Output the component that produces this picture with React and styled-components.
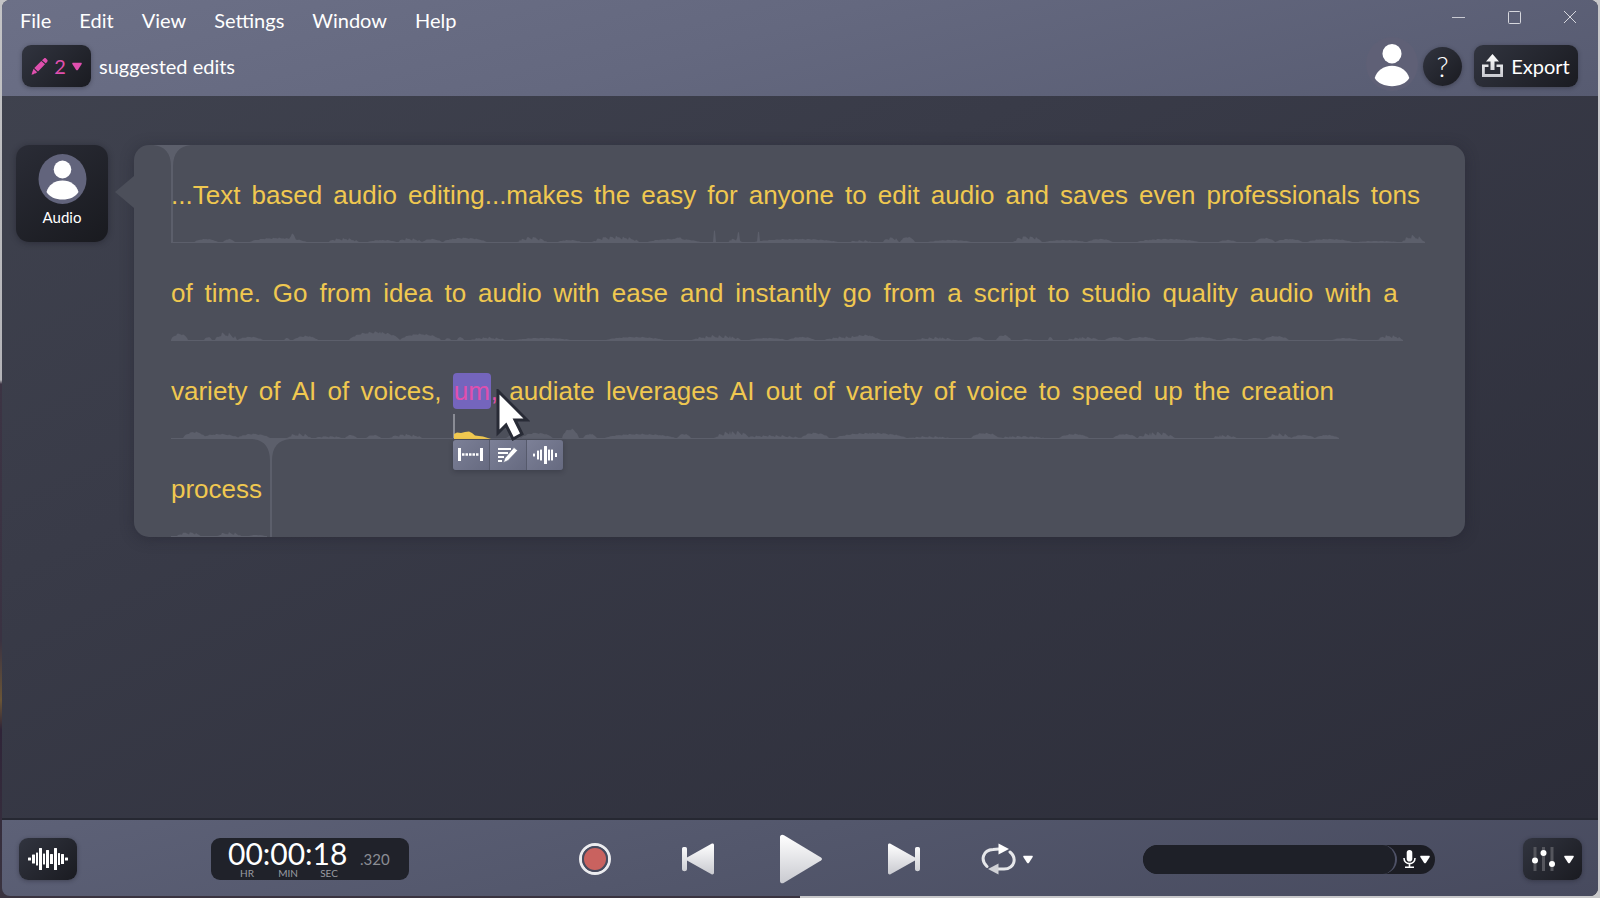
import React from "react";
import styled, { createGlobalStyle } from "styled-components";

const vars = {
	ui: `Lato, "Open Sans", sans-serif`,
	script: `"Liberation Sans", Arial, sans-serif`,
	yellow: "#f0c850",
	pink: "#e04fae",
	wave: "#5c5f6b",
	dark: "linear-gradient(135deg, #31343f 0%, #1a1b21 100%)",
};

const GlobalStyle = createGlobalStyle`
	* {
		box-sizing: border-box;
	}
	body {
		margin: 0;
		background: #d6d6d8;
		font-family: ${vars.ui};
		color: #fff;
	}
	button {
		margin: 0;
		padding: 0;
		border: 0;
		background: none;
		color: inherit;
		font-family: inherit;
		cursor: pointer;
	}
	svg {
		display: block;
		flex: none;
	}
`;

const Desktop = styled.div`
	display: flex;
	min-height: 100vh;
	padding: 0 2px 2px;
	background: linear-gradient(180deg, #c4c4c6 0, #b4b4b8 380px, #3c3444 384px, #3a3242 640px, #6a5536 700px, #2f2438 730px, #3a3440 100%) left / 50% 100% no-repeat, #c8c8ca;
`;

const Window = styled.div`
	flex: 1;
	min-width: 0;
	display: flex;
	flex-direction: column;
	border-radius: 8px;
	overflow: hidden;
	background: linear-gradient(155deg, #40434f 0%, #393b48 35%, #2b2c38 100%);
`;

const Header = styled.header`
	display: flex;
	flex-direction: column;
	gap: 5px;
	padding: 0 20px 9px 18px;
	background: linear-gradient(165deg, #6c7087 0%, #64687f 45%, #575b71 100%);
`;

const TitleRow = styled.div`
	display: flex;
	justify-content: space-between;
	align-items: flex-start;
	height: 40px;
`;

const Menu = styled.nav`
	display: flex;
	gap: 28px;
`;

const MenuItem = styled.button`
	height: 40px;
	font-size: 20px;
`;

const WindowControls = styled.div`
	display: flex;
	gap: 40px;
	height: 33px;
	align-items: center;
`;

const ControlButton = styled.button`
	width: 16px;
	height: 16px;
`;

const ToolRow = styled.div`
	display: flex;
	align-items: center;
	justify-content: space-between;
	padding-left: 2px;
`;

const Group = styled.div`
	display: flex;
	align-items: center;
	gap: ${({ $gap }) => $gap}px;
`;

const DarkButton = styled.button`
	display: flex;
	align-items: center;
	justify-content: center;
	gap: ${({ $gap = 6 }) => $gap}px;
	width: ${({ $width }) => $width}px;
	height: 42px;
	border-radius: 9px;
	background: ${vars.dark};
	box-shadow: 0 1px 4px rgba(20, 20, 30, .35);
	color: ${({ $accent }) => $accent ? vars.pink : "#fff"};
	font-size: 20px;
`;

const HelpButton = styled(DarkButton)`
	border-radius: 50%;
	width: 39px;
	height: 39px;
	font-size: 28px;
	font-weight: 300;
`;

const Account = styled.button`
	display: flex;
	align-items: center;
	width: 52px;
	height: 42px;
	margin-right: -7px;
	padding-bottom: 4px;
`;

const Label = styled.span`
	font-size: 20px;
`;

const Main = styled.main`
	flex: 1;
	display: flex;
	align-items: flex-start;
	gap: 26px;
	padding: 49px 133px 49px 14px;
`;

const Speaker = styled.button`
	flex: none;
	display: flex;
	flex-direction: column;
	align-items: center;
	justify-content: flex-start;
	gap: 4px;
	width: 92px;
	height: 97px;
	padding-top: 9px;
	border-radius: 13px;
	background: linear-gradient(145deg, #2a2c36 0%, #191a1f 100%);
	box-shadow: 0 1px 6px rgba(20, 20, 30, .4);
	font-size: 15px;
	line-height: 18px;
`;

const Bubble = styled.section`
	position: relative;
	flex: 1;
	min-width: 0;
	padding: 0 36px 0 37px;
	border-radius: 15px;
	background: #4c4f5a;
	box-shadow: 0 2px 14px rgba(30, 30, 42, .4);
	&::before {
		content: "";
		position: absolute;
		right: 100%;
		top: 31px;
		border: solid transparent;
		border-width: 16px 19px 16px 0;
		border-right-color: #4c4f5a;
	}
`;

const Line = styled.div`
	position: relative;
	display: flex;
	flex-direction: column;
	width: fit-content;
	height: 98px;
	padding-top: 32px;
	color: ${vars.yellow};
	font-family: ${vars.script};
	font-size: 26px;
	line-height: 36px;
	white-space: nowrap;
`;

/* words spread out over the length of their audio */
const Words = styled.div`
	display: flex;
	justify-content: space-between;
	gap: 8px;
	padding-right: 5px;
`;

const WaveSvg = styled.svg`
	margin-top: auto;
	height: 24px;
	overflow: visible;
	fill: ${vars.wave};
`;

const Marker = styled.svg`
	position: absolute;
	top: 0;
	left: ${({ $end }) => $end ? "calc(100% - 17px)" : "-20px"};
	fill: ${vars.wave};
`;

const Filler = styled.span`
	position: relative;
	color: ${vars.pink};
`;

const Selected = styled.mark`
	display: inline-block;
	padding: 0 1px;
	border-radius: 4px;
	background: #7465bd;
	color: inherit;
`;

const SelectedWave = styled.svg`
	position: absolute;
	left: 0;
	top: 41px;
`;

const EditBar = styled.div`
	position: absolute;
	z-index: 1;
	left: 0;
	top: 67px;
	display: flex;
	gap: 1px;
	border-radius: 3px;
	overflow: hidden;
	background: #565a6c;
	box-shadow: 0 2px 5px rgba(30, 30, 42, .3);
`;

const EditButton = styled.button`
	display: grid;
	place-items: center;
	width: 36px;
	height: 30px;
	background: linear-gradient(135deg, #7c8097, #666a80);
`;

const Pointer = styled.svg`
	position: absolute;
	z-index: 2;
	left: 43px;
	top: 16px;
`;

const Footer = styled.footer`
	display: grid;
	grid-template-columns: 1fr auto 1fr;
	align-items: center;
	height: 78px;
	padding: 2px 16px 0 17px;
	border-top: 2px solid #262832;
	background: linear-gradient(165deg, #5d6177 0%, #53576c 45%, #474a5e 100%);
`;

const Timer = styled.div`
	display: grid;
	grid-template-columns: 120px 1fr;
	grid-template-rows: 29px 13px;
	column-gap: 12px;
	width: 198px;
	height: 42px;
	padding: 0 17px;
	border-radius: 9px;
	background: #20222a;
`;

const Clock = styled.time`
	font-size: 30px;
	line-height: 30px;
`;

const Millis = styled.span`
	grid-row: span 2;
	color: #8b8d94;
	font-size: 15px;
	line-height: 42px;
`;

const Units = styled.div`
	display: grid;
	grid-template-columns: repeat(3, 1fr);
	column-gap: 3px;
	color: #9a9ca2;
	font-size: 10px;
	line-height: 13px;
	text-align: center;
`;

const Transport = styled.div`
	display: grid;
	grid-template-columns: repeat(5, 103px);
	justify-items: center;
	align-items: center;
`;

const PlainButton = styled.button`
	display: flex;
	align-items: center;
	gap: 7px;
`;

const RightGroup = styled(Group)`
	justify-content: flex-end;
`;

const Input = styled.div`
	display: flex;
	width: 292px;
	height: 29px;
	border-radius: 15px;
	overflow: hidden;
	background: #1c1d24;
`;

const Meter = styled.div`
	width: 254px;
	border-right: 2px solid #4f5267;
	border-radius: 15px;
	background: #1e2028;
`;

const MicButton = styled.button`
	display: flex;
	align-items: center;
	gap: 4px;
	padding-left: 6px;
`;

// [start, end, peak height, jagged]
const lines = [
	{
		text: "...Text based audio editing...makes the easy for anyone to edit audio and saves even professionals tons",
		length: 1254,
		humps: [[23, 47, 4], [52, 64, 4], [78, 136, 5], [118, 125, 9], [156, 189, 5, 1], [196, 226, 3], [226, 251, 5, 1], [251, 271, 4], [271, 316, 5], [346, 376, 6, 1], [386, 411, 3], [421, 469, 7, 1], [476, 530, 4], [503, 512, 6], [542, 545, 14], [557, 571, 5, 1], [566, 569, 11], [582, 669, 4], [586, 589, 12], [677, 702, 3, 1], [712, 728, 6, 1], [729, 744, 6], [756, 802, 3], [842, 872, 7, 1], [872, 916, 3], [916, 942, 4], [964, 1029, 4], [1047, 1066, 3], [1084, 1104, 5], [1104, 1132, 4], [1135, 1182, 4], [1182, 1231, 2], [1231, 1254, 8, 1]],
	},
	{
		text: "of time. Go from idea to audio with ease and instantly go from a script to studio quality audio with a",
		length: 1232,
		humps: [[0, 17, 7], [33, 41, 4], [44, 66, 9, 1], [66, 92, 4], [113, 119, 3], [122, 147, 5], [178, 229, 9], [229, 270, 7], [274, 280, 3], [286, 293, 4], [299, 335, 4, 1], [342, 402, 3], [434, 494, 4], [521, 571, 6, 1], [577, 617, 3], [617, 644, 4], [653, 705, 5, 1], [673, 713, 3], [678, 708, 6], [744, 784, 4, 1], [797, 814, 4], [825, 840, 6], [850, 862, 2], [877, 882, 4], [894, 930, 4, 1], [934, 954, 4], [957, 986, 4], [1012, 1046, 4], [1050, 1073, 3], [1076, 1092, 3], [1092, 1118, 5], [1160, 1188, 3], [1206, 1232, 6, 1]],
	},
	{
		text: "variety of AI of voices,",
		filler: "um",
		after: "audiate leverages AI out of variety of voice to speed up the creation",
		length: 1168,
		humps: [[12, 35, 7], [30, 68, 5], [66, 99, 5], [116, 140, 6, 1], [142, 174, 3, 1], [174, 186, 4], [195, 210, 4], [218, 252, 5, 1], [335, 350, 4], [350, 382, 6], [391, 408, 10], [412, 426, 5], [433, 505, 5], [506, 520, 5], [543, 580, 8, 1], [570, 632, 4, 1], [630, 658, 6], [664, 736, 6], [736, 780, 3, 1], [800, 828, 6], [822, 876, 3, 1], [888, 918, 5], [942, 966, 5], [966, 1004, 7, 1], [1040, 1066, 4, 1], [1096, 1120, 6, 1], [1120, 1144, 4], [1144, 1168, 4]],
	},
	{
		text: "process",
		length: 96,
		humps: [[6, 30, 5, 1], [46, 70, 5, 1], [76, 96, 2]],
	},
];

const wavePath = ({ humps, length }) => {
	let d = "M0 24";
	for (let x = 0; x <= length; x += 1) {
		let h = 1;
		humps.forEach(([from, to, peak, jagged]) => {
			if (x < from || x > to) return;
			const t = (x - from) / (to - from);
			const noise = ((x * 37 + (x % 7) * 11) % 10) / 10;
			const ripple = jagged ? 0.5 + 0.6 * noise : 0.85 + 0.25 * noise;
			h = Math.max(h, peak * Math.pow(Math.sin(Math.PI * t), 0.5) * ripple);
		});
		d += `L${x} ${(24 - h).toFixed(1)}`;
	}
	return `${d}L${length} 24Z`;
};

const Caret = ({ size = 10 }) => (
	<svg width={size} height={size - 1} viewBox="0 0 10 9" fill="currentColor">
		<path d="M1 .8h8c.7 0 1 .6.7 1.2L6 7.8c-.5.7-1.500.7-2 0L.3 2C0 1.400.3.8 1 .8z" />
	</svg>
);

const Person = ({ width, height, fill }) => (
	<svg width={width} height={height} viewBox="0 0 48 50">
		<ellipse cx="24" cy="25" rx="24" ry="25" fill={fill} />
		<ellipse cx="24" cy="15.500" rx="8.800" ry="9" fill="#fff" />
		<path d="M24 26.500c8 0 14 4.500 16 11.500-3 5-9 7.500-16 7.500s-13-2.500-16-7.500c2-7 8-11.500 16-11.500z" fill="#fff" />
	</svg>
);

const Bars = ({ bars, width, height }) => (
	<svg width={width} height={height} fill="#fff">
		{bars.map(([x, w, h]) => (
			<rect key={x} x={x} y={(height - h) / 2} width={w} height={h} rx=".5" />
		))}
	</svg>
);

const Gradient = ({ id }) => (
	<linearGradient id={id} x1="0" y1="0" x2="0" y2="1">
		<stop offset="0" stopColor="#fff" />
		<stop offset="1" stopColor="#c9cad0" />
	</linearGradient>
);

const PauseMarker = ({ end }) => (
	<Marker $end={end} width="42" height="98" viewBox="0 0 42 98" aria-hidden="true">
		<path d="M2 0H40C28 1 22 8 22 22V98H20V22C20 8 14 1 2 0Z" />
	</Marker>
);

const splitWords = (text) => text.split(" ").map((word, i) => <span key={i}>{word}</span>);

const FillerWord = ({ word }) => (
	<Filler>
		<Selected>{word}</Selected>,
		<SelectedWave width="40" height="26" aria-hidden="true">
			<path d="M0 0h2v24H0z" fill="#8a8c95" />
			<path d="M1 25V20L4 18.500 8 19 12 18 16 17.500 19 19 22 21.500 30 22.500 38 25Z" fill={vars.yellow} />
		</SelectedWave>
		<EditBar>
			<EditButton aria-label="Silence">
				<svg width="26" height="14" fill="#fff">
					<path d="M0 0h3v13H0zM22 0h3v13h-3z" />
					<path d="M4 6.500h17" stroke="#fff" strokeWidth="2.500" strokeDasharray="2.500 1" />
				</svg>
			</EditButton>
			<EditButton aria-label="Edit text">
				<svg width="22" height="18" viewBox="0 0 22 18">
					<path d="M1 3h13M1 7h10M1 11h6M1 15h4" stroke="#fff" strokeWidth="2" />
					<path d="M17 1.500l3.500 3L11 14.500l-4.500 2L8 12z" fill="#fff" stroke="#74788e" strokeWidth=".6" />
				</svg>
			</EditButton>
			<EditButton aria-label="Edit waveform">
				<Bars width={26} height={18} bars={[[1, 2, 3], [5, 2, 9], [8, 2, 11], [12, 3, 18], [16, 2, 11], [19, 2, 11], [23, 2, 4]]} />
			</EditButton>
		</EditBar>
		<Pointer width="34" height="52" viewBox="0 0 34 52" aria-hidden="true">
			<path d="M2 2V44L10 36 17 50 26 45 19 31H31Z" fill="#fff" stroke="#282b36" strokeWidth="3" />
		</Pointer>
	</Filler>
);

const App = () => (
	<>
		<GlobalStyle />
		<Desktop>
			<Window>
				<Header>
					<TitleRow>
						<Menu>
							{["File", "Edit", "View", "Settings", "Window", "Help"].map((item) => (
								<MenuItem key={item}>{item}</MenuItem>
							))}
						</Menu>
						<WindowControls>
							<ControlButton aria-label="Minimize">
								<svg width="16" height="16" stroke="#c9cad2"><path d="M2 8.500h13" /></svg>
							</ControlButton>
							<ControlButton aria-label="Maximize">
								<svg width="16" height="16" stroke="#d6d7dd" fill="none"><rect x="2.500" y="2.500" width="12" height="12" rx="1" /></svg>
							</ControlButton>
							<ControlButton aria-label="Close">
								<svg width="16" height="16" stroke="#d6d7dd"><path d="M2 2l12 12M14 2L2 14" /></svg>
							</ControlButton>
						</WindowControls>
					</TitleRow>
					<ToolRow>
						<Group $gap={8}>
							<DarkButton $width={69} $accent aria-label="2 suggested edits">
								<svg width="17" height="17" viewBox="0 0 17 17" fill="currentColor">
									<path d="M11 2.200L13 .5c.6-.6 1.400-.6 2 0l1.200 1.200c.6.6.6 1.400 0 2L14.800 5.500zM10.300 3l3.700 3.300L7 13.500 3.300 10zM2.600 10.800l3.500 3.400L4.500 15.500l-1-.3-.2.9L.5 16.800l1-3.200z" />
								</svg>
								2
								<Caret />
							</DarkButton>
							<Label>suggested edits</Label>
						</Group>
						<Group $gap={12}>
							<Account aria-label="Account"><Person width={52} height={56} fill="#5f6076" /></Account>
							<HelpButton aria-label="Help">?</HelpButton>
							<DarkButton $width={104} $gap={8}>
								<svg width="21" height="24" viewBox="0 0 21 24">
									<defs><Gradient id="export" /></defs>
									<path d="M10.500 0L17 7.500H12.500V16h-4V7.500H4zM6.500 10.500v2.500H2.800v7h15.400v-7h-3.700v-2.500H21V23H0V10.500z" fill="url(#export)" />
								</svg>
								Export
							</DarkButton>
						</Group>
					</ToolRow>
				</Header>
				<Main>
					<Speaker>
						<Person width={49} height={50} fill="#62647c" />
						Audio
					</Speaker>
					<Bubble>
						{lines.map((line, i) => (
							<Line key={line.text}>
								<Words>
									{splitWords(line.text)}
									{line.filler && <FillerWord word={line.filler} />}
									{line.after && splitWords(line.after)}
								</Words>
								<WaveSvg width={line.length} aria-hidden="true"><path d={wavePath(line)} /></WaveSvg>
								{i === 0 && <PauseMarker />}
								{i === lines.length - 1 && <PauseMarker end />}
							</Line>
						))}
					</Bubble>
				</Main>
				<Footer>
					<Group $gap={134}>
						<DarkButton $width={58} aria-label="Waveform">
							<Bars width={40} height={24} bars={[[0, 3, 3], [4, 3, 9], [8, 2, 13], [11, 3, 22], [15, 2, 11], [18, 3, 18], [22, 3, 10], [26, 3, 22], [30, 2, 12], [33, 3, 10], [37, 3, 3]]} />
						</DarkButton>
						<Timer>
							<Clock>00:00:18</Clock>
							<Millis>.320</Millis>
							<Units><span>HR</span><span>MIN</span><span>SEC</span></Units>
						</Timer>
					</Group>
					<Transport>
						<PlainButton aria-label="Record">
							<svg width="32" height="32">
								<circle cx="16" cy="16" r="14.500" fill="none" stroke="#ececef" strokeWidth="3" />
								<circle cx="16" cy="16" r="12" fill="#c9625f" stroke="#474b5e" strokeWidth="2" />
							</svg>
						</PlainButton>
						<PlainButton aria-label="Previous">
							<svg width="32" height="32" viewBox="0 0 32 32" fill="url(#skip)">
								<defs><Gradient id="skip" /></defs>
								<path d="M2.500 4A2 2 0 0 1 5 6V14.500L29.500.8C30.500.3 32 .8 32 2V30c0 1.200-1.500 1.700-2.500 1.200L5 17.500V26c0 3-5 3-5 0V6A2 2 0 0 1 2.500 4z" />
							</svg>
						</PlainButton>
						<PlainButton aria-label="Play">
							<svg width="42" height="50" viewBox="0 0 42 50">
								<defs><Gradient id="play" /></defs>
								<path d="M0 3C0 1 2 0 4 1.200L41 23.500c1.300.8 1.300 2.200 0 3L4 48.800C2 50 0 49 0 47z" fill="url(#play)" />
							</svg>
						</PlainButton>
						<PlainButton aria-label="Next">
							<svg width="32" height="32" viewBox="0 0 32 32" fill="url(#skip)">
								<path d="M29.500 4A2 2 0 0 0 27 6V14.500L2.500.8C1.500.3 0 .8 0 2V30c0 1.200 1.500 1.700 2.500 1.200L27 17.500V26c0 3 5 3 5 0V6A2 2 0 0 0 29.500 4z" />
							</svg>
						</PlainButton>
						<PlainButton aria-label="Loop">
							<svg width="35" height="32" viewBox="0 0 35 32">
								<path d="M6 23.500C-1 17 2 7 12 6.500L18 6M29 9C36 15 34 25.500 23 26H16" fill="none" stroke="#e6e7ea" strokeWidth="3" strokeLinecap="round" />
								<path d="M17.500.5L28 6 17.500 11.500z" fill="#fff" />
								<path d="M17.500 20.500L7 26 17.500 31.500z" fill="#d0d1d6" />
							</svg>
							<Caret />
						</PlainButton>
					</Transport>
					<RightGroup $gap={88}>
						<Input>
							<Meter role="meter" aria-label="Input level" aria-valuenow={0} aria-valuemin={0} aria-valuemax={100} />
							<MicButton aria-label="Microphone">
								<svg width="13" height="20" viewBox="0 0 13 20" fill="none" stroke="#fff" strokeWidth="1.600">
									<rect x="3.700" y="1" width="5.600" height="11.500" rx="2.800" fill="#fff" stroke="none" />
									<path d="M1 9c0 7.500 11 7.500 11 0M6.500 14.500V18M2 18.300h9" />
								</svg>
								<Caret />
							</MicButton>
						</Input>
						<DarkButton $width={59} $gap={9} aria-label="Mixer">
							<svg width="23" height="26" viewBox="0 0 23 26">
								<path d="M3 1v24M11.500 1v24M20 1v24" stroke="#55565d" strokeWidth="3" />
								<g fill="#fff"><circle cx="3" cy="14.500" r="3" /><circle cx="11.500" cy="7" r="3" /><circle cx="20" cy="18" r="3" /></g>
							</svg>
							<Caret />
						</DarkButton>
					</RightGroup>
				</Footer>
			</Window>
		</Desktop>
	</>
);

export default App;
